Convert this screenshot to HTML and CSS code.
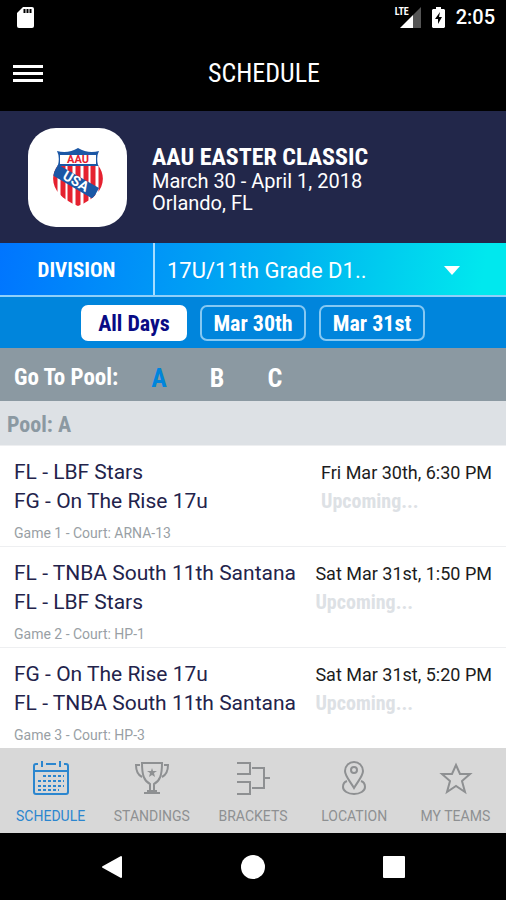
FILE: index.html
```html
<!DOCTYPE html>
<html lang="en">

<head>
    <meta charset="UTF-8">
    <meta name="viewport" content="width=device-width, initial-scale=1">
    <title>Schedule</title>
    <link rel="stylesheet" href="styles.css">
</head>

<body>
    <div class="status-bar">
        <svg width="17" height="21" viewBox="0 0 17 21" aria-hidden="true">
            <path fill="#fff" d="M6 0h9a2 2 0 0 1 2 2v17a2 2 0 0 1-2 2H2a2 2 0 0 1-2-2V6z" />
            <path stroke="#000" stroke-width="2" d="M7.500 2v4M10.500 2v4M13.500 2v4" />
        </svg>
        <div class="status-icons">
            <span class="signal">
                <svg width="26" height="21" viewBox="0 0 26 21" aria-hidden="true">
                    <path fill="#555" d="M26 0v21H18V8z" />
                    <path fill="#fff" d="M18 8v13H5z" />
                </svg>
                <span class="signal-type">LTE</span>
            </span>
            <svg width="13" height="21" viewBox="0 0 13 21" aria-hidden="true">
                <path fill="#fff" d="M4 0h5v2h3l1 1v17l-1 1H1l-1-1V3l1-1h3z" />
                <path fill="#000" d="M8 5 3 12h3v5l4-7H7z" />
            </svg>
            <span class="clock">2:05</span>
        </div>
    </div>

    <header class="header">
        <button type="button" class="menu-button" aria-label="Menu">
            <span></span>
            <span></span>
            <span></span>
        </button>
        <h1>SCHEDULE</h1>
    </header>

    <section class="event">
        <div class="event-logo">
            <svg width="50" height="58" viewBox="0 0 50 58" role="img" aria-label="AAU USA">
                <defs>
                    <clipPath id="shield">
                        <path d="M4 3Q15 6 25 0Q35 6 46 3Q43 9 45 17C56 32 48 49 25 58C2 49-6 32 5 17Q7 9 4 3z" />
                    </clipPath>
                </defs>
                <g clip-path="url(#shield)">
                    <rect width="50" height="58" fill="#fff" />
                    <path stroke="#e5212f" stroke-width="5" d="M2 14v44M10 14v44M17 14v44M25 14v44M33 14v44M40 14v44M48 14v44" />
                    <path fill="#1b57a5" d="M0 0h50v18H0z" />
                    <path fill="#fff" d="M7 7h36v9H7z" />
                    <path fill="#1b57a5" d="M4 16 46 40 40 51-1 27z" />
                </g>
                <text class="logo-aau" x="25" y="15" text-anchor="middle">AAU</text>
                <text class="logo-usa" x="23" y="38" text-anchor="middle" transform="rotate(30 23 33)">USA</text>
            </svg>
        </div>
        <div class="event-info">
            <h2>AAU EASTER CLASSIC</h2>
            <p>March 30 - April 1, 2018</p>
            <p>Orlando, FL</p>
        </div>
    </section>

    <div class="division">
        <label for="division">DIVISION</label>
        <div class="division-select">
            <select id="division">
                <option>17U/11th Grade D1..</option>
            </select>
            <svg width="16" height="9" viewBox="0 0 16 9" aria-hidden="true">
                <path fill="#fff" d="M0 0h16L8 9z" />
            </svg>
        </div>
    </div>

    <div class="days">
        <button type="button" class="active">All Days</button>
        <button type="button">Mar 30th</button>
        <button type="button">Mar 31st</button>
    </div>

    <nav class="pools">
        <span class="pools-label">Go To Pool:</span>
        <a href="#pool-a" class="active">A</a>
        <a href="#pool-b">B</a>
        <a href="#pool-c">C</a>
    </nav>

    <main class="games">
        <h3 id="pool-a">Pool: A</h3>
        <article class="game">
            <div class="teams">
                <p>FL - LBF Stars</p>
                <p>FG - On The Rise 17u</p>
                <small>Game 1 - Court: ARNA-13</small>
            </div>
            <div class="time">
                <p>Fri Mar 30th, 6:30 PM</p>
                <strong>Upcoming...</strong>
            </div>
        </article>
        <article class="game">
            <div class="teams">
                <p>FL - TNBA South 11th Santana</p>
                <p>FL - LBF Stars</p>
                <small>Game 2 - Court: HP-1</small>
            </div>
            <div class="time">
                <p>Sat Mar 31st, 1:50 PM</p>
                <strong>Upcoming...</strong>
            </div>
        </article>
        <article class="game">
            <div class="teams">
                <p>FG - On The Rise 17u</p>
                <p>FL - TNBA South 11th Santana</p>
                <small>Game 3 - Court: HP-3</small>
            </div>
            <div class="time">
                <p>Sat Mar 31st, 5:20 PM</p>
                <strong>Upcoming...</strong>
            </div>
        </article>
    </main>

    <nav class="tabs">
        <a href="#schedule" class="active">
            <svg width="36" height="36" viewBox="0 0 36 36" aria-hidden="true">
                <path d="M5 4H3a2 2 0 0 0-2 2v26a2 2 0 0 0 2 2h30a2 2 0 0 0 2-2V6a2 2 0 0 0-2-2h-2M13 4h10M9 1v6M27 1v6M1 11h34" />
                <path stroke-dasharray="3 2" d="M10 16h21M5 21h26M5 26h26M5 30h21" />
            </svg>
            SCHEDULE
        </a>
        <a href="#standings">
            <svg width="36" height="36" viewBox="0 0 36 36" aria-hidden="true">
                <path d="M8 3h20c0 12-2 18-8 21v7h-4v-7C10 21 8 15 8 3zM10 33h16M13 31h10M6 5H2c0 6 2 10 6 12M30 5h4c0 6-2 10-6 12" />
                <path class="solid" d="m18 8 1 3h4l-3 2 1 4-3-2-3 2 1-4-3-2h4z" />
            </svg>
            STANDINGS
        </a>
        <a href="#brackets">
            <svg width="36" height="36" viewBox="0 0 36 36" aria-hidden="true">
                <path d="M2 3h13v11H2M2 22h13v12H2M17 8h12v20H17M30 18h5" />
            </svg>
            BRACKETS
        </a>
        <a href="#location">
            <svg width="36" height="36" viewBox="0 0 36 36" aria-hidden="true">
                <path d="M18 28C14 21 9 16 9 11a9 9 0 0 1 18 0c0 5-5 10-9 17z" />
                <circle cx="18" cy="10" r="3" />
                <path d="M11 21c-3 1-4 3-4 6 0 4 5 7 11 7s11-3 11-7c0-3-1-5-4-6" />
            </svg>
            LOCATION
        </a>
        <a href="#my-teams">
            <svg width="36" height="36" viewBox="0 0 36 36" aria-hidden="true">
                <path d="m19 5 4 9h10l-8 7 3 11-9-6-9 6 3-11-8-7h10z" />
            </svg>
            MY TEAMS
        </a>
    </nav>

    <div class="system-nav">
        <button type="button" aria-label="Back">
            <svg width="24" height="24" viewBox="0 0 24 24"><path class="rounded" d="M21 2v20L3 12z" /></svg>
        </button>
        <button type="button" aria-label="Home">
            <svg width="24" height="24" viewBox="0 0 24 24"><circle cx="12" cy="12" r="12" /></svg>
        </button>
        <button type="button" aria-label="Recent apps">
            <svg width="24" height="24" viewBox="0 0 24 24"><rect x="1" y="1" width="22" height="22" rx="1" /></svg>
        </button>
    </div>
</body>

</html>
```
FILE: styles.css
```css
:root {
    --navy: #22274a;
    --blue: #0085dc;
    --slate: #8b99a2;
    --mist: #dde1e5;
    --grey: #8e9092;
    --tab-bg: #d8d8d8;

    --font: Roboto, "Liberation Sans", sans-serif;
    --font-condensed: "Roboto Condensed", Roboto, "Liberation Sans", sans-serif;
}

* {
    box-sizing: border-box;
}

body {
    display: flex;
    flex-direction: column;
    min-height: 100vh;
    margin: 0;
    background: white;
    font-family: var(--font);
}

h1,
h2,
h3,
p {
    margin: 0;
}

button {
    padding: 0;
    border: none;
    background: none;
    font-family: inherit;
    cursor: pointer;
}

a {
    text-decoration: none;
}

svg {
    display: block;
}

/* Status bar */
.status-bar {
    display: flex;
    justify-content: space-between;
    align-items: center;
    height: 34px;
    padding: 0 11px 0 17px;
    background: black;
    color: white;
}

.status-icons {
    display: flex;
    align-items: center;
    gap: 11px;
}

.signal {
    position: relative;
}

.signal-type {
    position: absolute;
    top: 0;
    left: 0;
    font: bold 10px/10px var(--font-condensed);
}

.clock {
    font-size: 20px;
    font-weight: 500;
}

/* Header */
.header {
    display: grid;
    grid-template-columns: 56px 1fr 34px;
    align-items: center;
    height: 77px;
    padding-top: 1px;
    background: black;
    color: white;
}

.header h1 {
    font: 400 26px/32px var(--font-condensed);
    text-align: center;
}

.menu-button {
    display: flex;
    flex-direction: column;
    gap: 4px;
    padding: 0 13px;
}

.menu-button span {
    height: 3px;
    background: white;
}

/* Event */
.event {
    display: flex;
    align-items: center;
    gap: 25px;
    height: 132px;
    padding: 0 28px;
    background: var(--navy);
    color: white;
}

.event-logo {
    display: grid;
    place-items: center;
    width: 99px;
    height: 99px;
    border-radius: 28px;
    background: white;
}

.logo-aau {
    fill: #e5212f;
    font: bold 11px var(--font);
}

.logo-usa {
    fill: white;
    font: bold 14px var(--font);
}

.event-info {
    padding-top: 3px;
    font-size: 20px;
    line-height: 22px;
}

.event-info h2 {
    font: bold 24px/26px var(--font-condensed);
}

/* Division */
.division {
    display: flex;
    height: 54px;
    border-bottom: 2px solid #8fd0fa;
    background: linear-gradient(100deg, #0075ff, #00b0f0 55%, #00e8ee 95%);
    color: white;
}

.division label {
    width: 155px;
    border-right: 2px solid #a5ddff;
    font: bold 21px/54px var(--font-condensed);
    text-align: center;
}

.division-select {
    display: flex;
    flex: 1;
    align-items: center;
    padding: 2px 46px 0 12px;
}

.division select {
    flex: 1;
    height: 100%;
    padding: 0;
    border: none;
    appearance: none;
    background: none;
    color: white;
    font: 400 22px var(--font);
}

.division option {
    color: black;
}

/* Days */
.days {
    display: flex;
    justify-content: center;
    align-items: center;
    gap: 13px;
    height: 51px;
    background: var(--blue);
}

.days button {
    width: 106px;
    height: 36px;
    padding-top: 2px;
    border: 2px solid #86c8f2;
    border-radius: 7px;
    color: white;
    font: bold 22px var(--font-condensed);
}

.days .active {
    border-color: white;
    background: white;
    color: #080b85;
}

/* Pools */
.pools {
    display: flex;
    align-items: center;
    height: 53px;
    padding: 6px 14px 0;
    background: var(--slate);
    color: white;
    font: bold 23px var(--font-condensed);
}

.pools-label {
    width: 116px;
}

.pools a {
    width: 58px;
    color: white;
    font-size: 26px;
    text-align: center;
}

.pools .active {
    color: var(--blue);
}

/* Games */
.games {
    flex: 1;
}

.games h3 {
    padding: 4px 7px 0;
    background: var(--mist);
    color: var(--slate);
    font: bold 22px/40px var(--font-condensed);
}

.game {
    display: flex;
    justify-content: space-between;
    padding: 12px 14px 3px;
    border-top: 1px solid #eeeff1;
    color: #23234b;
}

.teams p {
    font-size: 21px;
    line-height: 29px;
}

.teams small {
    display: block;
    padding-top: 7px;
    color: #999fa5;
    font-size: 14px;
    line-height: 20px;
}

.time p {
    color: #1c1c20;
    font-size: 18px;
    line-height: 30px;
}

.time strong {
    display: block;
    color: var(--mist);
    font: bold 20px/26px var(--font-condensed);
}

/* Tabs */
.tabs {
    display: grid;
    grid-template-columns: repeat(5, 1fr);
    height: 85px;
    background: var(--tab-bg);
}

.tabs a {
    display: flex;
    flex-direction: column;
    align-items: center;
    gap: 10px;
    padding-top: 12px;
    color: var(--grey);
    font-size: 14px;
    line-height: 20px;
}

.tabs .active {
    color: #2b86cf;
}

.tabs svg {
    fill: none;
    stroke: currentColor;
    stroke-width: 2;
}

.tabs .solid {
    fill: currentColor;
    stroke: none;
}

/* System navigation */
.system-nav {
    display: flex;
    justify-content: center;
    align-items: center;
    gap: 117px;
    height: 67px;
    background: black;
}

.system-nav svg {
    fill: white;
}

.system-nav .rounded {
    stroke: white;
    stroke-width: 2;
    stroke-linejoin: round;
}
```
